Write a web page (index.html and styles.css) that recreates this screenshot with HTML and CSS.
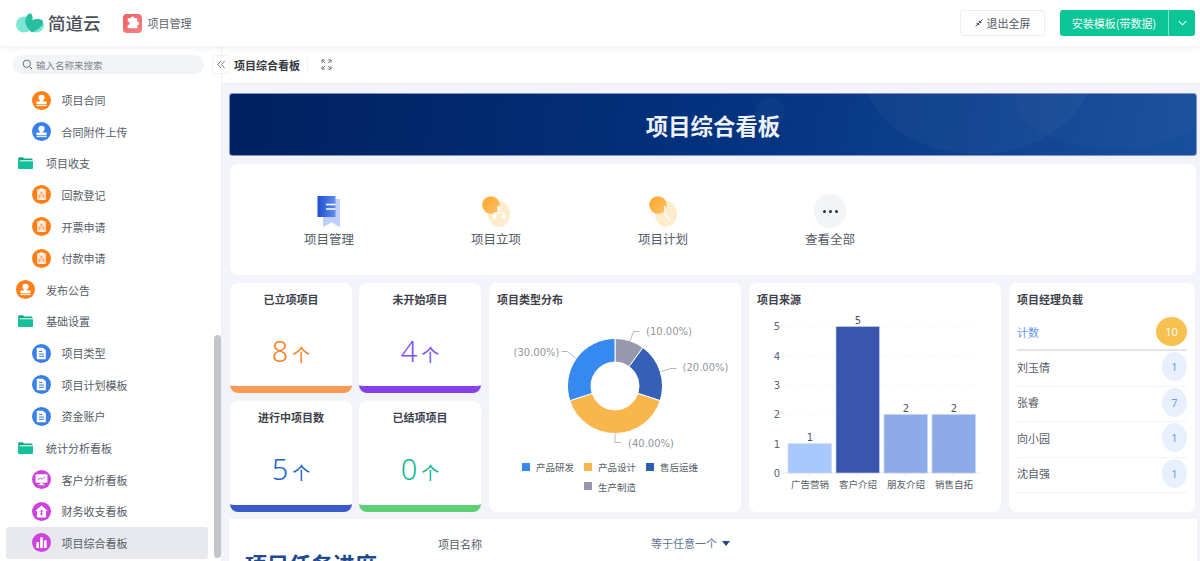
FILE: index.html
```html
<!DOCTYPE html>
<html lang="zh-CN">
<head>
<meta charset="utf-8">
<title>项目综合看板</title>
<link rel="stylesheet" href="styles.css">
</head>
<body>
<svg class="defs" width="0" height="0" aria-hidden="true">
  <symbol id="i-stamp" viewBox="0 0 24 24"><circle cx="12" cy="8.6" r="3.9" fill="#fff"/><path d="M10.4 11h3.2v3h-3.2z" fill="#fff"/><rect x="5.5" y="13.4" width="13" height="3.2" rx=".8" fill="#fff"/><rect x="5.5" y="17.6" width="13" height="1.5" fill="#fff" opacity=".85"/></symbol>
  <symbol id="i-clip" viewBox="0 0 24 24"><rect x="6.500" y="5.500" width="11" height="13.500" rx="1" fill="#ffe8d6"/><rect x="9.500" y="4.500" width="5" height="2.400" rx=".6" fill="#fff"/><path d="M10.800 8.600h2.400v2.200h-2.400zM8.300 13.600h2.400v2.200H8.300zM13.300 13.600h2.400v2.200h-2.400z" fill="#ff9a4a"/><path d="M12 10.800v1.600M9.500 13.600v-1.200h5v1.200" stroke="#ff9a4a" stroke-width=".7" fill="none"/></symbol>
  <symbol id="i-doc" viewBox="0 0 24 24"><path d="M7 4.800h7l3.500 3.500v10a1 1 0 0 1-1 1H7a1 1 0 0 1-1-1v-12.500a1 1 0 0 1 1-1z" fill="#fff"/><path d="M8.800 9.500h4M8.800 12.500h6.500M8.800 15.500h6.500" stroke="#3f80ea" stroke-width="1.300"/></symbol>
  <symbol id="i-screen" viewBox="0 0 24 24"><rect x="4.500" y="5.500" width="15" height="10.500" rx="1.200" fill="#fff"/><path d="M10.500 16h3v2h-3zM8 18h8v1.300H8z" fill="#fff"/><path d="M7.500 12.500l3-2.500 2.500 1.500 3.500-3" stroke="#cc44dd" stroke-width="1.200" fill="none"/></symbol>
  <symbol id="i-home" viewBox="0 0 24 24"><path d="M12 4.500l8 7h-2.300v8H6.300v-8H4z" fill="#fff"/><path d="M12 10.200v7M9.800 12.400L12 10.200l2.200 2.200M10 15h4" stroke="#cc44dd" stroke-width="1.200" fill="none"/></symbol>
  <symbol id="i-bars" viewBox="0 0 24 24"><rect x="5.500" y="11.500" width="3.400" height="7.500" rx=".8" fill="#fff"/><rect x="10.300" y="5.500" width="3.400" height="13.500" rx=".8" fill="#fff"/><rect x="15.100" y="9" width="3.400" height="10" rx=".8" fill="#fff"/></symbol>
  <symbol id="i-folder" viewBox="0 0 15 12"><path d="M.3 1.200Q.3.300 1.200.300h3.600l1.200 1.300h7.600q.9 0 .9.900v.8H2.400L.3 5z" fill="#0fa884"/><path d="M0 4.300h15v6.600q0 1-1 1H1q-1 0-1-1z" fill="#14c09a"/></symbol>
</svg>

<header class="topbar">
  <div class="brand">
    <svg class="logo" viewBox="0 0 28 20" aria-hidden="true">
      <ellipse cx="8" cy="11.500" rx="8" ry="8" fill="#7ce6d2"/>
      <ellipse cx="20" cy="13" rx="8" ry="6.500" fill="#7ce6d2"/>
      <path d="M16 19.500C11 15 8.500 11 9.500 6 10.500 1.500 14-.5 15.500 1 17 3 16.500 5.500 16.500 7.500 18.500 6 22 5 25 6.500 28 8 27.500 11 25 13.500 22.500 16 19 18 16 19.500Z" fill="#27bfa0"/>
    </svg>
    <span class="brand-name">简道云</span>
    <span class="brand-sep"></span>
    <span class="app-icon">
      <svg viewBox="0 0 20 20" aria-hidden="true"><path d="M8 4.500a2 2 0 0 1 4 0h3v3.300a2 2 0 0 1 0 4V15H5v-3.200a2 2 0 0 0 0-4V4.500z" fill="#fff"/></svg>
    </span>
    <span class="app-name">项目管理</span>
  </div>
  <div class="top-actions">
    <button class="btn-ghost" type="button">
      <svg class="exit-ico" viewBox="0 0 10 10" aria-hidden="true"><path d="M.8 9.200L3.700 6.300M2 5.500h2.500V8M9.200.8L6.300 3.700M8 4.500H5.500V2" stroke="#333c48" stroke-width="1.200" fill="none"/></svg>
      退出全屏
    </button>
    <div class="btn-split">
      <span class="btn-main">安装模板(带数据)</span>
      <span class="btn-caret"><svg viewBox="0 0 10 6" aria-hidden="true"><path d="M1 1l4 4 4-4" stroke="#fff" stroke-width="1.200" fill="none"/></svg></span>
    </div>
  </div>
</header>

<div class="layout">
  <aside class="sidebar">
    <div class="search">
      <svg viewBox="0 0 12 12" aria-hidden="true"><circle cx="5.200" cy="5.200" r="4" stroke="#5b6470" stroke-width="1" fill="none"/><path d="M8.200 8.200L11 11" stroke="#5b6470" stroke-width="1"/></svg>
      <span>输入名称来搜索</span>
    </div>
    <nav class="menu">
      <a class="item child"><span class="dot orange"><svg><use href="#i-stamp"/></svg></span>项目合同</a>
      <a class="item child"><span class="dot blue"><svg><use href="#i-stamp"/></svg></span>合同附件上传</a>
      <a class="item"><svg class="folder"><use href="#i-folder"/></svg>项目收支</a>
      <a class="item child"><span class="dot orange"><svg><use href="#i-clip"/></svg></span>回款登记</a>
      <a class="item child"><span class="dot orange"><svg><use href="#i-clip"/></svg></span>开票申请</a>
      <a class="item child"><span class="dot orange"><svg><use href="#i-clip"/></svg></span>付款申请</a>
      <a class="item top"><span class="dot orange"><svg><use href="#i-stamp"/></svg></span>发布公告</a>
      <a class="item"><svg class="folder"><use href="#i-folder"/></svg>基础设置</a>
      <a class="item child"><span class="dot blue"><svg><use href="#i-doc"/></svg></span>项目类型</a>
      <a class="item child"><span class="dot blue"><svg><use href="#i-doc"/></svg></span>项目计划模板</a>
      <a class="item child"><span class="dot blue"><svg><use href="#i-doc"/></svg></span>资金账户</a>
      <a class="item"><svg class="folder"><use href="#i-folder"/></svg>统计分析看板</a>
      <a class="item child"><span class="dot purple"><svg><use href="#i-screen"/></svg></span>客户分析看板</a>
      <a class="item child"><span class="dot purple"><svg><use href="#i-home"/></svg></span>财务收支看板</a>
      <a class="item child active"><span class="dot purple"><svg><use href="#i-bars"/></svg></span>项目综合看板</a>
    </nav>
    <span class="scrollbar"></span>
    <span class="collapse">
      <svg viewBox="0 0 10 10" aria-hidden="true"><path d="M4.500 1L1 5l3.500 4M8.500 1L5 5l3.500 4" stroke="#5b6470" stroke-width="1" fill="none"/></svg>
    </span>
  </aside>

  <main class="main">
    <div class="tabbar">
      <span class="tab-title">项目综合看板</span>
      <span class="tab-sep"></span>
      <svg class="tab-expand" viewBox="0 0 12 12" aria-hidden="true"><path d="M1 4V1h3M8 1h3v3M11 8v3H8M4 11H1V8M1.500 1.500L4.500 4.500M10.500 1.500L7.500 4.500M10.500 10.500L7.500 7.500M1.500 10.500L4.500 7.500" stroke="#59626e" stroke-width="1" fill="none"/></svg>
    </div>
    <div class="content">
      <section class="banner">
        <span class="glow glow-a"></span>
        <span class="glow glow-b"></span>
        <span class="glow glow-c"></span>
        <h1>项目综合看板</h1>
      </section>

      <section class="apps">
        <div class="app">
          <svg class="app-ico" viewBox="0 0 32 32" aria-hidden="true">
            <defs><linearGradient id="gb" x1="0" y1="0" x2="1" y2="0"><stop offset="0" stop-color="#1f4fcf"/><stop offset="1" stop-color="#5f8df0"/></linearGradient></defs>
            <path d="M10 4h17v28l-8.500-4.500L10 32z" fill="#bcd0fb"/>
            <rect x="4.500" y="1" width="18" height="21" fill="url(#gb)"/>
            <path d="M13 9.500h9.500M13 14h9.500" stroke="#fff" stroke-width="1.600"/>
          </svg>
          <span>项目管理</span>
        </div>
        <div class="app">
          <svg class="app-ico" viewBox="0 0 32 32" aria-hidden="true">
            <defs><linearGradient id="go" x1="0" y1="0" x2="1" y2="1"><stop offset="0" stop-color="#ffa426"/><stop offset="1" stop-color="#ffc36b"/></linearGradient></defs>
            <ellipse cx="19" cy="19" rx="11" ry="13" fill="#ffeccb"/>
            <circle cx="11" cy="10" r="8.800" fill="url(#go)"/>
            <path d="M17.200 11.500h3.600v3.600h-3.600zM12.500 20h3.600v3.600h-3.600zM21.900 20h3.600v3.600h-3.600z" fill="#fff"/>
            <path d="M19 15v3h-4.700v2M19 18h4.700v2" stroke="#fff" stroke-width="1" fill="none"/>
          </svg>
          <span>项目立项</span>
        </div>
        <div class="app">
          <svg class="app-ico" viewBox="0 0 32 32" aria-hidden="true">
            <ellipse cx="19" cy="19" rx="11" ry="13" fill="#ffeccb"/>
            <circle cx="11" cy="10" r="8.800" fill="url(#go)"/>
            <path d="M18 11v9l6 6" stroke="#fff" stroke-width="1.400" fill="none"/>
          </svg>
          <span>项目计划</span>
        </div>
        <div class="app">
          <span class="more"><i></i><i></i><i></i></span>
          <span>查看全部</span>
        </div>
      </section>

      <section class="dash">
        <div class="stats">
          <div class="stat s-orange"><h3>已立项项目</h3><p><b>8</b><small>个</small></p></div>
          <div class="stat s-purple"><h3>未开始项目</h3><p><b>4</b><small>个</small></p></div>
          <div class="stat s-blue"><h3>进行中项目数</h3><p><b>5</b><small>个</small></p></div>
          <div class="stat s-green"><h3>已结项项目</h3><p><b>0</b><small>个</small></p></div>
        </div>

        <div class="panel">
          <h3>项目类型分布</h3>
          <svg class="chart" viewBox="489 311 252 201" aria-label="项目类型分布">
            <g transform="translate(615 386)" stroke="#fff" stroke-width="1">
              <path d="M0 -47.500A47.500 47.500 0 0 1 27.920 -38.430L14.110 -19.420A24 24 0 0 0 0 -24Z" fill="#9798ae"/>
              <path d="M27.920 -38.430A47.500 47.500 0 0 1 45.180 14.680L22.830 7.420A24 24 0 0 0 14.110 -19.420Z" fill="#3461b6"/>
              <path d="M45.180 14.680A47.500 47.500 0 0 1 -45.180 14.680L-22.830 7.420A24 24 0 0 0 22.830 7.420Z" fill="#f8b64c"/>
              <path d="M-45.180 14.680A47.500 47.500 0 0 1 0 -47.500L0 -24A24 24 0 0 0 -22.830 7.420Z" fill="#3589ef"/>
            </g>
            <g class="leader">
              <path d="M630 341l3.500 -9.500h6"/>
              <path d="M661.500 371.500l9 -3h6"/>
              <path d="M576 358.500l-8.500 -7h-6"/>
              <path d="M615 433.500v9h6"/>
            </g>
            <g class="pct">
              <text x="646" y="335">(10.00%)</text>
              <text x="682.500" y="371">(20.00%)</text>
              <text x="513.500" y="356">(30.00%)</text>
              <text x="628" y="446.500">(40.00%)</text>
            </g>
            <g class="legend">
              <rect x="522" y="463" width="8" height="8" fill="#3589ef"/><text x="536" y="471">产品研发</text>
              <rect x="584" y="463" width="8" height="8" fill="#f8b64c"/><text x="598" y="471">产品设计</text>
              <rect x="646" y="463" width="8" height="8" fill="#2f5cb5"/><text x="660" y="471">售后运维</text>
              <rect x="584" y="482" width="8" height="8" fill="#9798ae"/><text x="598" y="491">生产制造</text>
            </g>
          </svg>
        </div>

        <div class="panel">
          <h3>项目来源</h3>
          <svg class="chart" viewBox="749 311 252 201" aria-label="项目来源">
            <g class="grid-lines">
              <path d="M783 326.500H980M783 355.500H980M783 385H980M783 414.500H980M783 443.500H980"/>
            </g>
            <path class="axis" d="M783 473H980M809.500 473v3M857.500 473v3M905.500 473v3M953.500 473v3"/>
            <g class="bars">
              <rect x="788" y="443.700" width="43.500" height="29.300" fill="#a9c9fe"/>
              <rect x="836" y="326.500" width="43.500" height="146.500" fill="#3955ad"/>
              <rect x="884" y="414.400" width="43.500" height="58.600" fill="#8eabe8"/>
              <rect x="932" y="414.400" width="43.500" height="58.600" fill="#8eabe8"/>
            </g>
            <g class="y-labels">
              <text x="780" y="330">5</text><text x="780" y="359.500">4</text><text x="780" y="388.500">3</text><text x="780" y="418">2</text><text x="780" y="447.500">1</text><text x="780" y="476.500">0</text>
            </g>
            <g class="bar-values">
              <text x="810" y="441">1</text><text x="858" y="324">5</text><text x="906" y="411.500">2</text><text x="954" y="411.500">2</text>
            </g>
            <g class="x-labels">
              <text x="810" y="488">广告营销</text><text x="858" y="488">客户介绍</text><text x="906" y="488">朋友介绍</text><text x="954" y="488">销售自拓</text>
            </g>
          </svg>
        </div>

        <div class="panel load">
          <h3>项目经理负载</h3>
          <ul>
            <li class="total"><span>计数</span><em>10</em></li>
            <li><span>刘玉倩</span><em>1</em></li>
            <li><span>张睿</span><em>7</em></li>
            <li><span>向小园</span><em>1</em></li>
            <li><span>沈自强</span><em>1</em></li>
          </ul>
        </div>
      </section>

      <section class="tasks">
        <h2>项目任务进度</h2>
        <span class="f-label">项目名称</span>
        <span class="f-op">等于任意一个<i></i></span>
      </section>
    </div>
  </main>
</div>
</body>
</html>
```
FILE: styles.css
```css
* { box-sizing: border-box; }
html, body { margin: 0; height: 561px; overflow: hidden; }
body {
  font-family: "Noto Sans CJK SC", "Noto Sans", sans-serif;
  font-size: 11px;
  color: #555c66;
  background: #fff;
  display: flex;
  flex-direction: column;
}
.defs { position: absolute; }
h1, h2, h3, p, ul { margin: 0; padding: 0; }

/* top bar */
.topbar {
  height: 46px;
  flex: none;
  display: flex;
  align-items: center;
  justify-content: space-between;
  padding: 0 5px 0 16px;
  background: #fff;
  box-shadow: 0 2px 6px rgba(40, 50, 70, .08);
  position: relative;
  z-index: 2;
}
.brand { display: flex; align-items: center; }
.logo { width: 28px; height: 20px; margin-right: 4px; }
.brand-name { font-size: 17.500px; color: #4a4f57; font-weight: 500; line-height: 20px; }
.brand-sep { width: 1px; height: 19px; background: #f2f3f5; margin: 0 9px 0 12px; }
.app-icon {
  width: 19px; height: 19px; border-radius: 4px;
  background: linear-gradient(135deg, #ef5f62, #f58184);
  display: flex;
}
.app-icon svg { width: 100%; height: 100%; }
.app-name { margin-left: 6px; font-size: 11px; color: #5e646d; }
.top-actions { display: flex; align-items: center; gap: 15px; }
.btn-ghost {
  width: 85px; height: 26px;
  font: inherit; color: #555c66;
  background: #fff;
  border: 1px solid #eceef1;
  border-radius: 3px;
  display: flex; align-items: center; justify-content: center; gap: 4px;
  padding: 0;
}
.exit-ico { width: 8px; height: 8px; }
.btn-split {
  display: flex; height: 26px; width: 135px;
  background: #0cc596; border-radius: 3px; color: #f1fffa;
}
.btn-main { flex: 1; display: flex; align-items: center; justify-content: center; border-right: 1px solid #7fe4c8; }
.btn-caret { width: 26px; display: flex; align-items: center; justify-content: center; }
.btn-caret svg { width: 9px; height: 6px; }

/* layout */
.layout { flex: 1; display: flex; min-height: 0; }
.sidebar {
  width: 222px; flex: none;
  position: relative;
  border-right: 1px solid #eef0f3;
  background: #fff;
}
.search {
  position: relative;
  margin: 9px 0 0 13px;
  width: 191px; height: 19px;
  border-radius: 10px;
  background: #f3f4f6;
  display: flex; align-items: center;
  padding-left: 9px;
  font-size: 9.500px; color: #80868f;
}
.search svg { width: 11px; height: 11px; margin-right: 3px; }
.menu { margin: 10.200px 0 0 6px; width: 202px; }
.item {
  height: 31.650px;
  display: flex; align-items: center;
  padding-left: 12px;
  border-radius: 3px;
  color: #555c66;
}
.item.child { padding-left: 25.500px; }
.item.top { padding-left: 10px; }
.item.active { background: #e8e9ee; }
.dot {
  width: 19px; height: 19px; border-radius: 50%;
  margin-right: 11px; flex: none; display: flex;
}
.item.top .dot { margin-right: 11px; }
.dot svg { width: 100%; height: 100%; }
.orange { background: #ff7f17; }
.blue { background: #3980ea; }
.purple { background: #cc44dd; }
.folder { width: 15px; height: 12px; margin-right: 13px; flex: none; }
.scrollbar {
  position: absolute; left: 214px; top: 289px;
  width: 7px; height: 223px;
  border-radius: 4px; background: #c2c5c9;
}
.collapse {
  position: absolute; left: 212px; top: 9px;
  width: 18px; height: 19px;
  background: #fff; border: 1px solid #f1f2f4; border-radius: 3px;
  display: flex; align-items: center; justify-content: center;
}
.collapse svg { width: 9px; height: 9px; }

/* main */
.main { flex: 1; min-width: 0; display: flex; flex-direction: column; }
.tabbar {
  height: 38px; flex: none;
  display: flex; align-items: center;
  padding-left: 12px;
  border-bottom: 1px solid #eceef2;
  background: #fff;
}
.tab-title { font-weight: 700; color: #33383f; width: 73px; }
.tab-sep { width: 1px; height: 14px; background: #f0f1f3; margin-right: 13px; }
.tab-expand { width: 11px; height: 11px; }
.content {
  flex: 1; min-height: 0; overflow: hidden;
  background: #f3f4f9;
  padding: 9px 3px 0 7px;
}
.banner {
  height: 63px;
  border-radius: 3px;
  border: 1px solid #8294bf;
  background: linear-gradient(100deg, #00205f 0%, #03327f 50%, #194f9c 100%);
  display: flex; align-items: center; justify-content: center;
  position: relative; overflow: hidden;
}
.banner h1 { font-size: 22.400px; font-weight: 700; color: #eef1f6; position: relative; line-height: 30px; }
.glow { position: absolute; border-radius: 50%; background: rgba(255, 255, 255, .03); }
.glow-a { left: 632px; top: -110px; width: 230px; height: 170px; }
.glow-b { left: 785px; top: -45px; width: 200px; height: 100px; background: rgba(255, 255, 255, .02); }
.glow-c { left: 525px; top: 3px; width: 30px; height: 30px; }

.apps {
  margin: 8px 1px 0 1px;
  height: 111px;
  background: #fff;
  border-radius: 8px;
  display: flex;
  padding: 30px 0 0 15.500px;
}
.app {
  width: 167px;
  display: flex; flex-direction: column; align-items: center;
  color: #555c66; font-size: 12.500px;
}
.app > span:last-child { margin-top: 2px; line-height: 20px; }
.app-ico { width: 32px; height: 32px; margin-top: 1px; }
.more {
  width: 32px; height: 34px; border-radius: 50%;
  background: #f3f4f6;
  margin-bottom: -1px;
  display: flex; align-items: center; justify-content: center; gap: 3px;
}
.more i { width: 3px; height: 3px; border-radius: 50%; background: #2d333c; }

/* dashboard */
.dash {
  margin: 8px 0 0 1px;
  display: flex; gap: 8px;
  height: 229px;
}
.stats {
  width: 251px; flex: none;
  display: grid;
  grid-template-columns: 122px 122px;
  grid-template-rows: 110px 111px;
  column-gap: 7px; row-gap: 8px;
}
.stat {
  background: #fff; border-radius: 8px;
  border-bottom: 7px solid;
  text-align: center;
  padding-top: 9px;
}
.stat h3 { font-size: 11px; font-weight: 700; color: #3d424a; line-height: 14px; }
.stat p { margin-top: 25px; display: flex; justify-content: center; align-items: baseline; gap: 4px; line-height: 40px; }
.stat b { font-family: "Noto Sans", sans-serif; font-weight: 300; font-size: 29px; }
.stat small { font-size: 18px; }
.s-orange { border-color: #f99a57; color: #f97f20; }
.s-purple { border-color: #8642ea; color: #8150ea; }
.s-blue { border-color: #3a5bc7; color: #2264c9; }
.s-green { border-color: #5fcf75; color: #10b995; }

.panel {
  width: 252px; flex: none;
  background: #fff; border-radius: 8px;
  padding-top: 9px;
  display: flex; flex-direction: column;
}
.panel h3 {
  font-size: 11px; font-weight: 700; color: #3d424a; line-height: 14px;
  padding-left: 8px;
}
.chart { display: block; width: 252px; height: 201px; margin-top: 5px; }
.leader path { stroke: #b5b7bd; stroke-width: 1; fill: none; }
.pct text { font-family: "DejaVu Sans", sans-serif; font-size: 10px; fill: #93959d; }
.legend text, .x-labels text { font-size: 9.500px; fill: #555c66; }
.grid-lines path { stroke: #f5f6f7; stroke-width: 1; stroke-dasharray: 3 3; fill: none; }
.axis { stroke: #e3e5e9; stroke-width: 1; fill: none; }
.bars rect { stroke: #c8d6f5; stroke-width: .6; }
.y-labels text { font-family: "DejaVu Sans", sans-serif; font-size: 10px; fill: #5c6270; text-anchor: end; }
.bar-values text { font-family: "DejaVu Sans", sans-serif; font-size: 10px; fill: #4f5562; text-anchor: middle; }
.x-labels text { text-anchor: middle; }

.load { width: 186px; }
.load ul { list-style: none; margin: 8px 8px 0 8px; }
.load li {
  height: 35.500px;
  display: flex; align-items: center; justify-content: space-between;
  border-bottom: 1px solid #f2f3f5;
  color: #555c66;
  padding-bottom: 3px;
}
.load em {
  width: 25px; height: 29px; border-radius: 50%;
  background: #e8f0fd; color: #6f9be8;
  font-style: normal; font-size: 11px;
  display: flex; align-items: center; justify-content: center;
  font-family: "Noto Sans", sans-serif;
}
.load li.total { height: 37px; border-bottom: 2px solid #e4e5e7; color: #6a98ee; padding-bottom: 0; }
.load li.total em { width: 31px; background: #f7c14f; color: #fff; }

/* tasks */
.tasks {
  margin: 7px 0 0 0;
  height: 60px;
  background: #fff;
  display: flex; align-items: flex-start;
  position: relative;
}
.tasks h2 {
  font-size: 22px; font-weight: 700; color: #1f4a8f;
  margin: 29px 0 0 16px; width: 193px; line-height: 30px; flex: none;
}
.f-label { margin-top: 17px; width: 213px; color: #555c66; }
.f-op { margin-top: 16px; color: #5f7496; display: flex; align-items: center; gap: 5px; }
.f-op i { width: 0; height: 0; border: 4.500px solid transparent; border-top: 5px solid #23497f; border-bottom: 0; }
```
